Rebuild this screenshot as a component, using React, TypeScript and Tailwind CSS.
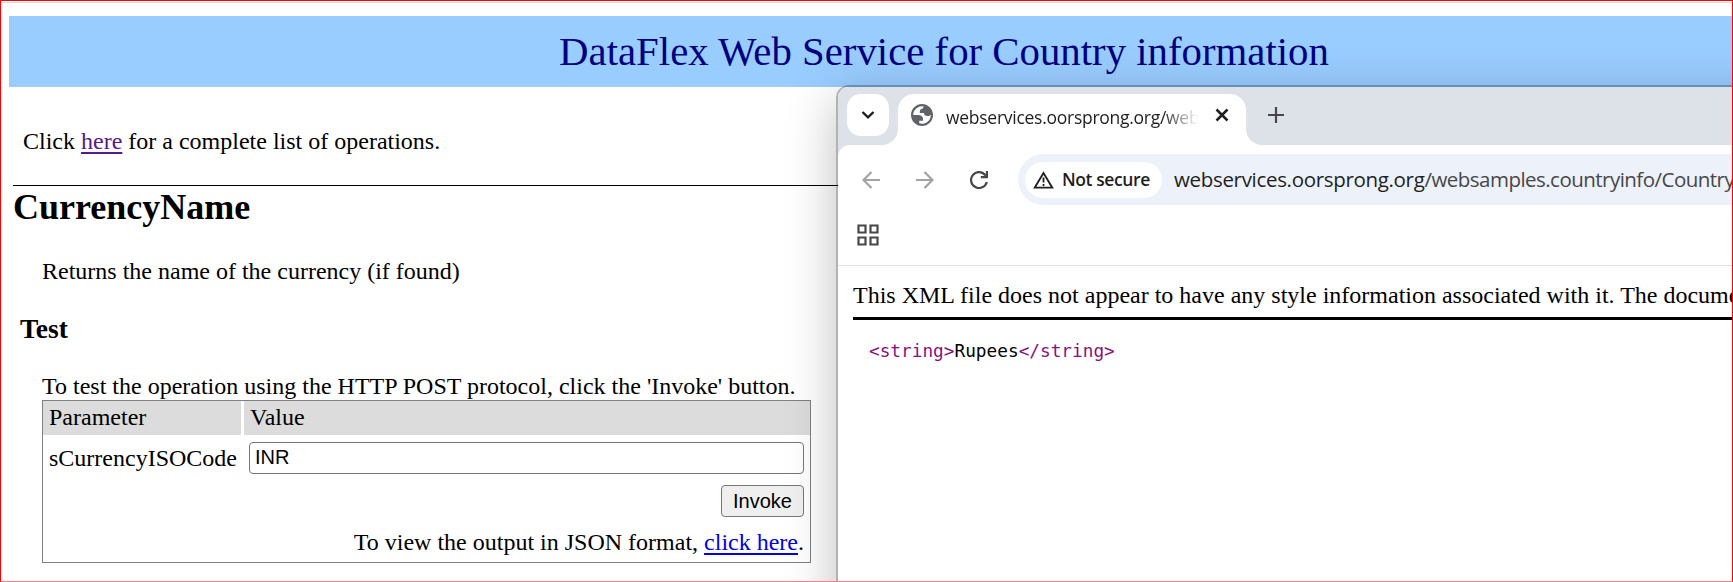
import type { ReactNode } from "react";

const serif = "font-['Liberation_Serif','Times_New_Roman',serif]";
const sans = "font-['Liberation_Sans',Arial,sans-serif]";
const ui = "font-['Open_Sans','Segoe_UI',sans-serif]";

function Link({ children, visited = false }: { children: ReactNode; visited?: boolean }) {
  return (
    <a
      href="#"
      className={`underline decoration-2 underline-offset-[3px] ${visited ? "text-[#551a8b]" : "text-[#0000ee]"}`}
    >
      {children}
    </a>
  );
}

function ServicePage() {
  return (
    <main className={`${serif} w-[1890px] pt-[13px] text-[24px] leading-[28px] text-black`}>
      <header className="ml-[9px] flex h-[71px] w-[1870px] items-center justify-center bg-[#99ccff] text-[40.8px] leading-[46px] text-[#000080]">
        DataFlex Web Service for Country information
      </header>
      <p className="mt-[40px] ml-[23px] h-[58px]">
        Click <Link visited>here</Link> for a complete list of operations.
      </p>
      <hr className="ml-[13px] border-t border-black" />
      <h1 className="ml-[13px] text-[36px] leading-[42px] font-bold">CurrencyName</h1>
      <p className="mt-[29px] ml-[42px]">Returns the name of the currency (if found)</p>
      <h2 className="mt-[28px] ml-[20px] text-[27.5px] leading-[32px] font-bold">Test</h2>
      <section className="mt-[27px] ml-[42px] w-[769px]">
        <p className="h-[28px]">To test the operation using the HTTP POST protocol, click the 'Invoke' button.</p>
        <div className="h-[163px] border border-[#808080]">
          <div className="flex h-[34px] gap-[3px]">
            <div className="w-[198px] bg-[#dcdcdc] pt-[2px] pl-1.5">Parameter</div>
            <div className="flex-1 bg-[#dcdcdc] pt-[2px] pl-[6px]">Value</div>
          </div>
          <div className="flex h-[44px] items-center pt-[1px] pr-1.5 pl-1.5">
            <label className="w-[200px]" htmlFor="iso">
              sCurrencyISOCode
            </label>
            <input
              id="iso"
              defaultValue="INR"
              className={`${sans} h-8 min-w-0 flex-1 rounded-[4px] border border-[#767676] bg-white px-[5px] text-[20px] outline-none`}
            />
          </div>
          <div className="flex h-[49px] justify-end pt-[6px] pr-1.5">
            <button
              className={`${sans} flex h-8 w-[83px] items-center justify-center rounded-[4px] border border-[#767676] bg-[#efefef] text-[20px]`}
            >
              Invoke
            </button>
          </div>
          <p className="pr-1.5 text-right">
            To view the output in JSON format, <Link>click here</Link>.
          </p>
        </div>
      </section>
    </main>
  );
}

function GlobeIcon() {
  return (
    <svg className="size-[22px]" viewBox="2 2 20 20" fill="#5f6368">
      <path
        fillRule="evenodd"
        d="M12 2C6.480 2 2 6.480 2 12s4.480 10 10 10 10-4.480 10-10S17.520 2 12 2zM4 12h4.400c3.407.022 4.922 1.730 4.543 5.127H9.488v2.470a8.004 8.004 0 0 0 10.498-8.083C19.327 12.504 18.332 13 17 13c-2.137 0-3.206-.916-3.206-2.750h-3.748c-.274-2.728.683-4.092 2.870-4.092 0-.975.327-1.597.811-1.970A8.004 8.004 0 0 0 4 12z"
      />
    </svg>
  );
}

function TabStrip() {
  return (
    <div className="flex h-[58px] bg-[#dde2e9]">
      <div className="flex w-[60px] pt-[7px] pl-[9px]">
        <button className="flex size-[42px] items-center justify-center rounded-[14px] bg-white">
          <svg width="14" height="10" viewBox="0 0 14 10" fill="none" stroke="#1f1f1f" strokeWidth="2.4">
            <path d="M1.500 2L7 7.400L12.500 2" />
          </svg>
        </button>
      </div>
      <div className="relative mt-[7px] flex w-[348px] rounded-t-[16px] bg-white pl-[13px]">
        <svg className="absolute bottom-0 -left-4 size-4" viewBox="0 0 16 16" fill="#fff">
          <path d="M16 0A16 16 0 0 1 0 16H16Z" />
        </svg>
        <svg className="absolute -right-4 bottom-0 size-4" viewBox="0 0 16 16" fill="#fff">
          <path d="M0 0A16 16 0 0 0 16 16H0Z" />
        </svg>
        <div className="mt-[10px]">
          <GlobeIcon />
        </div>
        <div
          className={`${ui} mt-[9px] ml-[13px] h-7 w-[252px] overflow-hidden mask-r-from-86% text-[17.5px] leading-[28px] tracking-[-0.27px] whitespace-nowrap text-[#1f1f1f]`}
        >
          webservices.oorsprong.org/web
        </div>
        <svg className="mt-[14px] ml-[17px] h-[14px] w-[14px] shrink-0" viewBox="0 0 14 14" stroke="#1f1f1f" strokeWidth="2.5">
          <path d="M1.500 1.500L12.500 12.500M12.500 1.500L1.500 12.500" />
        </svg>
      </div>
      <svg className="mt-[20px] ml-[22px] size-4" viewBox="0 0 16 16" stroke="#474747" strokeWidth="2.2">
        <path d="M8 0V16M0 8H16" />
      </svg>
    </div>
  );
}

function Toolbar() {
  return (
    <div className="flex h-[60px] items-center pt-[9px]">
      <svg className="ml-[24px] size-[18px] shrink-0" viewBox="0 0 18 18" fill="none" stroke="#a3a3a3" strokeWidth="2.2">
        <path d="M9.500 1L1.500 9L9.500 17M1.500 9H18" />
      </svg>
      <svg className="ml-[36px] size-[18px] shrink-0" viewBox="0 0 18 18" fill="none" stroke="#a3a3a3" strokeWidth="2.2">
        <path d="M8.500 1L16.500 9L8.500 17M16.500 9H0" />
      </svg>
      <svg className="ml-[36px] size-[18px] shrink-0" viewBox="0 0 18 18" fill="none" stroke="#474747" strokeWidth="2.2">
        <path d="M15.700 4.600A8 8 0 1 0 16.800 11M17 0V6.200H10.800" />
      </svg>
      <div className="ml-[30px] flex h-[51px] w-[1000px] shrink-0 items-center rounded-l-full bg-[#ecf1fa] pl-[7px] whitespace-nowrap">
        <div className="flex h-9 w-[137px] shrink-0 items-center rounded-full bg-white pl-[8px]">
          <svg className="h-[18px] w-[21px] shrink-0" viewBox="0 0 21 18" fill="none" stroke="#1f1f1f" strokeWidth="1.8">
            <path d="M10.500 2L1.700 16.700H19.300ZM10.500 6.500V11.500M10.500 13V15" />
          </svg>
          <span className={`${ui} ml-2 text-[17.5px] font-semibold tracking-[-0.4px] text-[#1f1f1f]`}>Not secure</span>
        </div>
        <span className={`${ui} ml-[12px] text-[20.5px] tracking-[-0.53px] text-[#474747]`}>
          <span className="tracking-[-0.32px] text-[#1f1f1f]">webservices.oorsprong.org</span>/websamples.countryinfo/Country
        </span>
      </div>
    </div>
  );
}

function BrowserWindow() {
  return (
    <div className="absolute top-[85px] left-[836px] h-[600px] w-[1000px] rounded-[13px] border-2 border-black/30 bg-clip-padding shadow-[0_14px_50px_rgba(0,0,0,0.26)]">
      <div className="h-full overflow-hidden rounded-[11px] bg-white">
        <TabStrip />
        <div className="bg-[linear-gradient(#dde2e9,#dde2e9)] bg-[length:12px_12px] bg-no-repeat">
          <div className="rounded-tl-[12px] bg-white">
            <Toolbar />
            <div className="h-[61px] border-b border-[#dfe1e3] pt-[19px] pl-[19px]">
              <svg className="size-[22px]" viewBox="0 0 22 22" fill="none" stroke="#474747" strokeWidth="2.2">
                <path d="M1.500 1.500H8.500V8.500H1.500ZM13.500 1.500H20.500V8.500H13.500ZM1.500 13.500H8.500V20.500H1.500ZM13.500 13.500H20.500V20.500H13.500Z" />
              </svg>
            </div>
          </div>
        </div>
        <div className={`${serif} ml-[15px] h-[54px] border-b-[3px] border-black pt-[15px] text-[24px] leading-[28px] whitespace-nowrap text-black`}>
          This XML file does not appear to have any style information associated with it. The document
        </div>
        <div className="mt-[18px] ml-[31px] font-['DejaVu_Sans_Mono',monospace] text-[17.75px] leading-[26px] text-black">
          <span className="text-[#881280]">&lt;string&gt;</span>Rupees<span className="text-[#881280]">&lt;/string&gt;</span>
        </div>
      </div>
    </div>
  );
}

export default function App() {
  return (
    <div className="relative h-[582px] w-[1733px] overflow-hidden bg-white">
      <div className="mt-[2px] h-px w-full bg-[#dcdcdc]" />
      <ServicePage />
      <BrowserWindow />
      <div className="pointer-events-none absolute top-0 left-0 h-[582px] w-[1733px] border border-t-[#ff0000] border-r-[#ff0000] border-b-[#ff8080] border-l-[#ff0000]" />
    </div>
  );
}
